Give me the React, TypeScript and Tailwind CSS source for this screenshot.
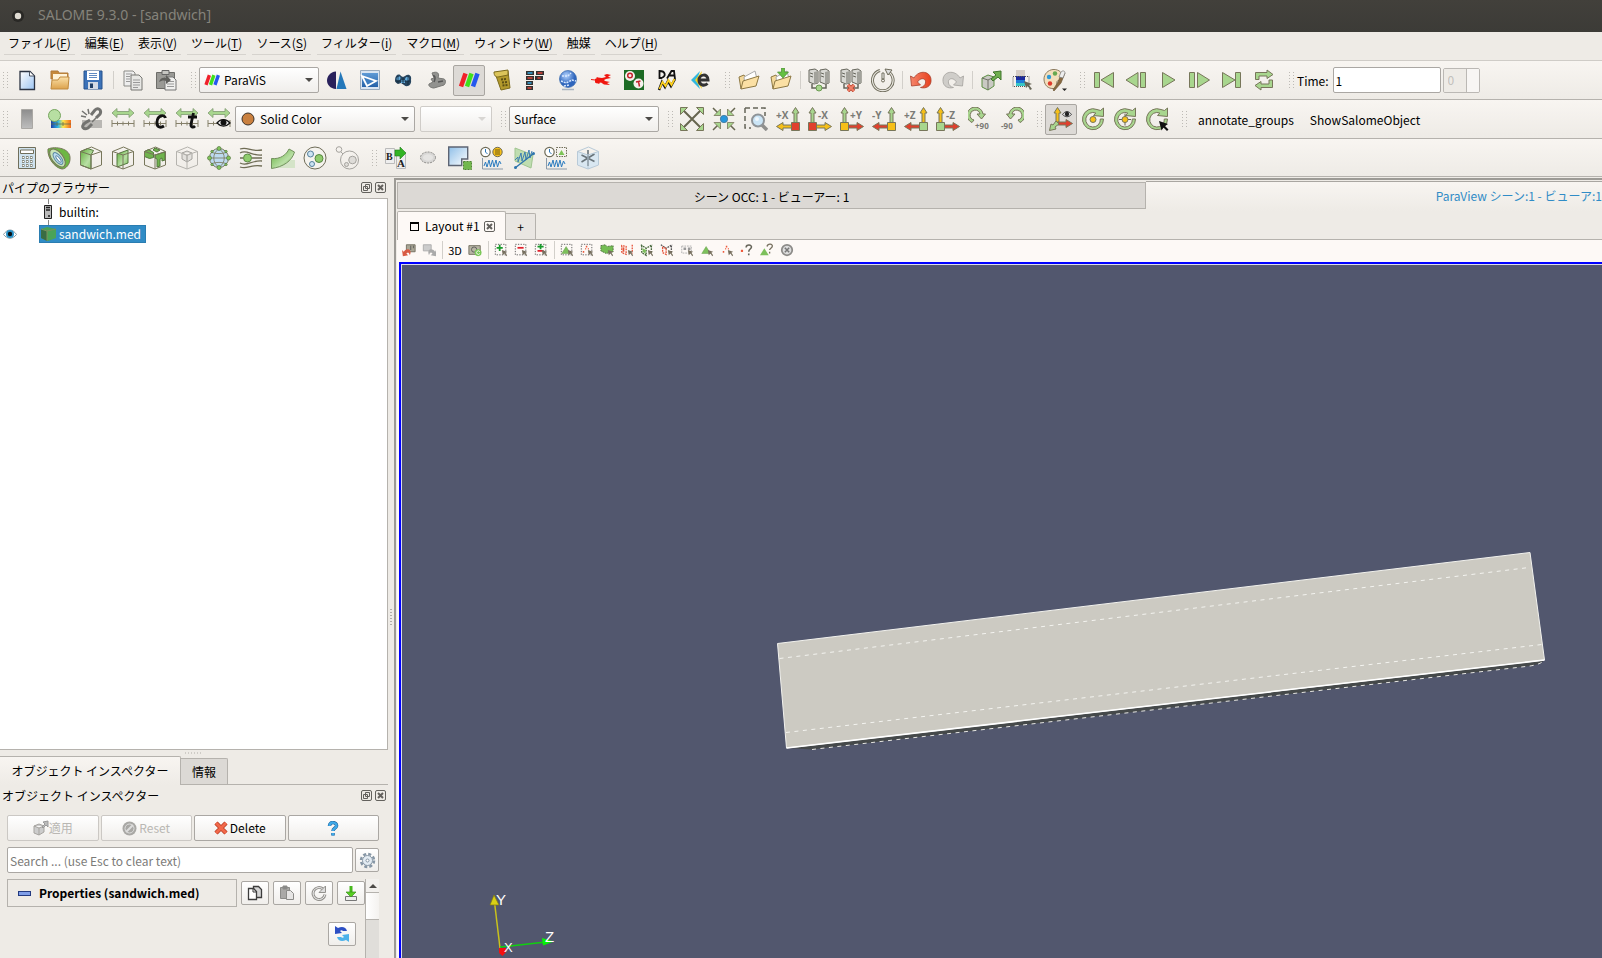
import React, { useState } from 'react'
import clsx from 'clsx'

interface Tool {
  label: string
  icon: React.ReactNode
  active?: boolean
}

const GREEN = '#a8d68e'
const YELLOW = '#f6bf18'
const RED = '#e0402e'
const LINE = '#77765a'

function Icon({ children, small }: { children: React.ReactNode; small?: boolean }) {
  return (
    <svg
      viewBox={small ? '0 0 16 16' : '0 0 24 24'}
      className={small ? 'w-3.5 h-3.5 shrink-0' : 'w-6 h-6 shrink-0'}
      fill="none"
    >
      {children}
    </svg>
  )
}

/* ---------- shared drawings ---------- */

function Stripes() {
  return (
    <g strokeWidth="4.500">
      <path d="M4 18.500 8.500 5.500" stroke="#f0202a" />
      <path d="M10 18.500 14.500 5.500" stroke="#3fe01c" />
      <path d="M16 18.500 20.500 5.500" stroke="#2458ee" />
    </g>
  )
}

function AxisView({ sign, up, side, box, right }: { sign: string; up: string; side: string; box: string; right?: boolean }) {
  // right: the horizontal arrow points to the right and the box sits on the left
  return (
    <Icon>
      <g transform={right ? undefined : 'translate(24 0) scale(-1 1)'} stroke={LINE}>
        <path d="M3 16V6H1l3.500-5.500L8 6H6v10z" fill={up} />
        <path d="M8 18h9v-2.500l6.500 4-6.500 4V21H8z" fill={side} />
        <path d="M.5 15.500h8v8h-8z" fill={box} />
      </g>
      <text x={right ? 10 : 0} y="12" fontSize="10" fontWeight="bold" fill="#7b7b76" fontFamily="Open Sans, sans-serif">
        {sign}
      </text>
    </Icon>
  )
}

function RangeIcon({ children }: { children?: React.ReactNode }) {
  return (
    <Icon>
      <path d="m1 6 5-4.500v3h12v-3L23 6l-5 4.500v-3H6v3z" fill={GREEN} stroke="#7f9a70" strokeWidth=".8" />
      <path d="M1 13v7M23 13v7M1 16.500h22M6.500 14.500v4M12 14.500v4M17.500 14.500v4" stroke="#85806a" />
      {children}
    </Icon>
  )
}

function Cube({ inner, fill, stroke = LINE }: { inner: React.ReactNode; fill?: string; stroke?: string }) {
  return (
    <Icon>
      <path d="M1.500 5.500 12 9v14l-10.500-4zM22.500 5.500 12 9v14l10.500-4z" fill={fill} />
      {inner}
      <path d="M1.500 5.500 12.500 1l10 4.500V19L12 23 1.500 19zM1.500 5.500 12 9l10.500-3.500M12 9v14" stroke={stroke} />
    </Icon>
  )
}

const CIRCLE_ARROW = 'M16 2.500A10.500 10.500 0 1 0 22.500 12h-3.200a7.300 7.300 0 1 1-4.500-6L12.500 8.500 22.500 9.500V1l-3 2.500z'

function Camera({ children, arrow = GREEN }: { children?: React.ReactNode; arrow?: string }) {
  return (
    <Icon>
      <path d={CIRCLE_ARROW} fill={arrow} stroke={LINE} />
      {children}
    </Icon>
  )
}

function Folder() {
  return (
    <>
      <path d="m4 21-2-12 5-2 1 2 10-3 1 3" fill="#f4d99a" stroke="#8d7843" />
      <path d="m7 9 11-6 2 8-12 6z" fill="#fff" stroke="#aaa" />
      <path d="m4 21 2-8 16-5-3 10z" fill="#fbe0a4" stroke="#8d7843" />
    </>
  )
}

function Servers() {
  return (
    <>
      <path d="m2 2 6-1 3 2v12l-4 1-5-2zM13 2l6-1 3 2v12l-4 1-5-2z" fill="#d9d9d4" stroke="#66665c" />
      <path d="M7 4v12l4-1V3zM18 4v12l4-1V3z" fill="#a2a29b" />
      <path d="M3 5l3 1M3 8l3 1M14 5l3 1M14 8l3 1" stroke="#66665c" />
      <path d="M5 16v4h14v-4" stroke="#66665c" strokeWidth="1.500" />
    </>
  )
}

function Clock() {
  return (
    <>
      <circle cx="5.500" cy="6" r="4.700" fill="#fff" stroke="#6f6c58" strokeWidth="1.200" />
      <path d="M5.500 3v3l2 2" stroke="#2d78b8" />
      <path d="M2.500 12v11H23" stroke="#8b9aa8" />
      <path d="m4 20 1.500-4 1.500 5 2-7 1.500 7 2-7 1.500 7 2-7 1.500 7 2-6 1.500 3" stroke="#2b7cc0" />
    </>
  )
}

/* ---------- toolbar contents ---------- */

const fileTools: Tool[] = [
  {
    label: 'New',
    icon: (
      <Icon>
        <path d="M5 3.500h10l4.500 4.500v13.500H5z" fill="url(#sheet)" stroke="#2b3342" strokeWidth="1.300" />
        <path d="M14.500 3.500V8H19" fill="#fff" stroke="#2b3342" strokeWidth=".8" />
      </Icon>
    ),
  },
  {
    label: 'Open',
    icon: (
      <Icon>
        <path d="M3 3h7l1 2h9v6H3z" fill="#c68a3d" stroke="#b07a3a" />
        <path d="M5 6h14v6H5z" fill="#fff3d8" />
        <path d="m3 21 1-9h6l2-3h9l-1 12z" fill="url(#folder)" stroke="#c08b40" />
      </Icon>
    ),
  },
  {
    label: 'Save',
    icon: (
      <Icon>
        <path d="M3 3h18v18H3z" fill="#3c72b8" stroke="#27528d" />
        <path d="M6 3h12v9H6z" fill="#fff" />
        <path d="M8 5.500h8M8 7.500h8M8 9.500h8" stroke="#5f8ac2" />
        <path d="M7 14h10v7H7z" fill="#d4dbe5" />
        <path d="M9 15.500h3V20H9z" fill="#224066" />
      </Icon>
    ),
  },
]

const clipTools: Tool[] = [
  {
    label: 'Copy',
    icon: (
      <Icon>
        <path d="M3 3h9l2 2v13H3z" fill="#eee" stroke="#8b8b87" />
        <path d="M10 7h8l3 3v12H10z" fill="#e8e8e5" stroke="#777773" />
        <path d="M5 6h6M5 8.500h4M5 11h4M5 13.500h4M12 12h7M12 14.500h7M12 17h7M12 19.500h5" stroke="#999" />
      </Icon>
    ),
  },
  {
    label: 'Paste',
    icon: (
      <Icon>
        <path d="M2.500 4.500h18v16h-18z" fill="#9a9a96" stroke="#6d6d69" />
        <path d="M8 2.500h7v4H8z" fill="#c6c6c2" stroke="#666" />
        <path d="M11 9h8l3 3v10H11z" fill="#f0f0ee" stroke="#777" />
        <path d="M13 13.500h7M13 16h7M13 18.500h7" stroke="#999" />
        <path d="M5 14c1-4 4-5 7-4V7l5 5-5 4v-3c-3-1-5 0-7 1z" fill="#5f5f5c" />
      </Icon>
    ),
  },
]

const moduleTools: Tool[] = [
  {
    label: 'Shaper',
    icon: (
      <Icon>
        <path d="M11 3.500v17.500C5 20.500 2 16.500 2 12.500s3-8.500 9-9z" fill="#29215c" />
        <path d="m15.500 3.500 6 17.500H11.500z" fill="#2478ba" />
      </Icon>
    ),
  },
  {
    label: 'Geometry',
    icon: (
      <Icon>
        <path d="M2.500 2.500h19v19h-19z" fill="#d9e5f2" stroke="#9aabbd" />
        <path d="M4 5h16v14H4z" fill="url(#blue)" />
        <path d="m4 8 14 5-9 5z" fill="#3d7dc0" stroke="#fff" strokeWidth="1.800" />
      </Icon>
    ),
  },
  {
    label: 'Mesh',
    icon: (
      <Icon>
        <path d="M4 12c0-5 4-7 6-4l2 1 2-1c4-3 7 0 6 4 1 5-4 8-7 5l-3-2c-3 2-6 0-6-3z" fill="#27455f" />
        <path d="M5.500 11c1-3 4-3 4-1s-3 4-4 1zM14 11c1-3 4-3 4 0s-4 3-4 0zM10 12h4v3h-4z" fill="#64aee0" />
        <path d="M4 13h15M7 8v8M17 8v9M12 10v6" stroke="#0f2233" strokeWidth=".7" />
      </Icon>
    ),
  },
  {
    label: 'Field',
    icon: (
      <Icon>
        <path d="M8 5c5-2 8 0 6 5l6 1c2 1 2 4 0 6l-10 3c-3 0-6-2-5-4l4-2-2-3 3-1z" fill="#92928f" stroke="#787875" />
        <path d="M9 8c3-1 2 4 1 6M14 14l5-1" stroke="#555" strokeWidth="1.500" />
      </Icon>
    ),
  },
  { label: 'ParaViS', active: true, icon: <Icon><Stripes /></Icon> },
  {
    label: 'Homard',
    icon: (
      <Icon>
        <path d="m5 5 13-2 2 17-9 2z" fill="#b39a2c" stroke="#7b6a1c" />
        <path d="M4 4c0 4 2 5 4 5l10-2V2z" fill="#dbc45a" stroke="#7b6a1c" />
        <path d="M11 11.500 17 11M12 14.500l6-.5M12.500 17.500l6-.5" stroke="#5c4f14" strokeDasharray="2 1" strokeWidth="2" />
      </Icon>
    ),
  },
  {
    label: 'YACS',
    icon: (
      <Icon>
        <path d="M3 3h8v4H3zM13 3h8v4h-8zM3 8h8v4H3zM3 13h7v4H3zM3 18h7v4H3zM12 8h8v4h-8z" fill="#333" />
        <path d="M4.500 5h5M4.500 15h4" stroke="#35a7e0" strokeWidth="1.500" />
        <path d="M14.500 5h5M4.500 10h5M4.500 20h4M14.500 10h3" stroke="#e04438" strokeWidth="1.500" />
      </Icon>
    ),
  },
  {
    label: 'JobManager',
    icon: (
      <Icon>
        <circle cx="12" cy="11" r="8.500" fill="url(#globe)" stroke="#3769ad" strokeWidth=".7" />
        <path d="M6 8h6l3-3M5 13l5 2 6-3 4 1M8 18l5-1" stroke="#d7e8ff" strokeWidth="1.500" strokeDasharray="2 1" />
        <path d="M6 21.500h12" stroke="#aab4c2" strokeWidth="1.500" />
      </Icon>
    ),
  },
  {
    label: 'Hexablock',
    icon: (
      <Icon>
        <path d="m6 11 3-1.500 4 .5 4-1-2-2 3-1 4 1-3 1.500 3 1.500-5 1-2 1 1 1 5 1-3 1 3 2-6-.5-3-2-4 1-2-1z" fill="#f0160f" />
        <path d="m2 11.500 4 .5M8 9l2 7" stroke="#f0160f" />
      </Icon>
    ),
  },
  {
    label: 'OpenTURNS',
    icon: (
      <Icon>
        <path d="M2 2h20v20H2z" fill="#1c6b24" />
        <circle cx="8" cy="8" r="5" fill="#f4f1ec" />
        <circle cx="16.500" cy="15.500" r="5" fill="#f4f1ec" />
        <circle cx="8" cy="7.500" r="2.300" stroke="#c3222a" strokeWidth="1.500" />
        <path d="m14 14 4.500-1M16.500 13.500l1 5" stroke="#c3222a" strokeWidth="1.500" />
      </Icon>
    ),
  },
  {
    label: 'ADAO',
    icon: (
      <Icon>
        <path d="M4.500 10V3c6 0 7 5 2 7zM12 10.500l4.500-7.500H19l1 8M13 7.500h6" stroke="#111" strokeWidth="1.800" />
        <path d="m4 22 3-8 3 5 3-6 3 5 4-7" stroke="#111" strokeWidth="2.500" />
        <path d="m4.500 21 3-7 3 4 3-6 3 5 3-6" stroke="#ffd21d" strokeWidth="1.800" />
      </Icon>
    ),
  },
  {
    label: 'eFICAS',
    icon: (
      <Icon>
        <path d="m12 3-9 9 9 9-3-9z" fill="#31b7df" />
        <path d="m14 3-7 9 7 9-2-9z" fill="#f5d322" />
        <path d="M11.500 12h8.500c0-7-9-6-9 0 0 6 6 6 8.500 3.500" stroke="#333" strokeWidth="3" />
      </Icon>
    ),
  },
]

const stateTools: Tool[] = [
  { label: 'Open file', icon: <Icon><Folder /></Icon> },
  {
    label: 'Load state',
    icon: (
      <Icon>
        <Folder />
        <path d="M12.500 0h3v4h4L14 10 8.500 4h4z" fill="#66c043" stroke="#4b8c33" strokeWidth=".7" />
      </Icon>
    ),
  },
]

const serverTools: Tool[] = [
  { label: 'Connect', icon: <Icon><Servers /><circle cx="12" cy="20" r="3" fill={GREEN} stroke="#6b9c52" /></Icon> },
  {
    label: 'Disconnect',
    icon: (
      <Icon>
        <Servers />
        <path d="m9 17 6 6m0-6-6 6" stroke="#b8402c" strokeWidth="3.500" />
        <path d="m9 17 6 6m0-6-6 6" stroke="#f08068" strokeWidth="2" />
      </Icon>
    ),
  },
  {
    label: 'Auto apply',
    icon: (
      <Icon>
        <path d="M16 3A10.300 10.300 0 1 1 9 2.500" stroke="#6f6c5c" strokeWidth="3" />
        <path d="M16 3A10.300 10.300 0 1 1 9 2.500" stroke="#e8e6df" strokeWidth="1.200" />
        <path d="m14 1 7 1-4 5z" fill="#ddd" stroke="#6f6c5c" />
        <path d="M11 5h2v6h-2z" fill="#fff" stroke="#6f6c5c" />
        <circle cx="12" cy="12.500" r="1.500" stroke="#6f6c5c" />
      </Icon>
    ),
  },
]

const UNDO = 'm1.500 8 1 10 9-1-3-3c3-5 9-4 8 1-.5 2-2 4-5 4.500 6 1.500 10-1.500 10.500-6C23 3 10 1 5 10z'

const undoTools: Tool[] = [
  { label: 'Undo', icon: <Icon><path d={UNDO} fill="url(#undo)" stroke="#a8402c" strokeWidth=".8" /></Icon> },
  {
    label: 'Redo',
    icon: <Icon><path d={UNDO} transform="matrix(-1 0 0 1 24 0)" fill="#cfcdc9" stroke="#a3a19d" strokeWidth=".8" /></Icon>,
  },
]

const miscTools: Tool[] = [
  {
    label: 'Extract',
    icon: (
      <Icon>
        <path d="m3 10 6-3 6 2v9l-6 4-6-3z" fill="#c9c9c3" stroke="#5c8e43" />
        <path d="m3 10 6 2 6-3M9 12v10" stroke="#6f6f66" />
        <path d="m12 11 5-4-3-3 8-1v9l-3-3-5 4z" fill="#6fae4e" stroke="#40742c" />
      </Icon>
    ),
  },
  {
    label: 'Color map',
    icon: (
      <Icon>
        <path d="M5 2h9v6H5z" fill="#d6cdc6" />
        <path d="M5 8h9v4H5z" fill="#1c2a9c" />
        <path d="M5 12h9v3H5z" fill="#1e7cd8" />
        <path d="M5 15h9v3H5z" fill="#38c6c6" />
        <path d="M2 8.500h16v10H2z" stroke="#555" strokeDasharray="1 1" />
        <path d="m13 13 8 3-3 1 3 4-2 1-2-4-2 2z" fill="#666555" />
      </Icon>
    ),
  },
  {
    label: 'Palette',
    icon: (
      <Icon>
        <path d="M10 1.500c6-.5 11 4 9 9-1 3-4 1-5 3s2 6-3 7C5 21 1 17 1 11c0-5 4-9 9-9.500z" fill="#f3dfbd" stroke="#8d7c60" />
        <circle cx="6" cy="9" r="2.200" fill="#2f9ad6" />
        <circle cx="12" cy="5.500" r="2.200" fill="#67a850" />
        <circle cx="7" cy="15.500" r="2.200" fill="#de3a2b" />
        <path d="m19 4 3 1-4 10-7 8-1-1 5-8z" fill="#8a6a41" stroke="#6f5a3b" strokeWidth=".7" />
        <path d="M18 4c2-2 4-1 4 1l-2 5-4-1z" fill="#eee" stroke="#777" strokeWidth=".7" />
        <path d="M19 20.500h5l-2.500 2.500z" fill="#222" />
      </Icon>
    ),
  },
]

const vcrTools: Tool[] = [
  { label: 'First frame', icon: <Icon><path d="M2.500 4.500h5v15h-5zM21.500 4.500v15L9 12z" fill={GREEN} stroke={LINE} /></Icon> },
  { label: 'Previous frame', icon: <Icon><path d="M16.500 4.500h5v15h-5zM14 4.500v15L2 12z" fill={GREEN} stroke={LINE} /></Icon> },
  { label: 'Play', icon: <Icon><path d="M6.500 4.500v15L19 12z" fill={GREEN} stroke={LINE} /></Icon> },
  { label: 'Next frame', icon: <Icon><path d="M1.500 4.500h5v15h-5zM9.500 4.500v15l12-7.500z" fill={GREEN} stroke={LINE} /></Icon> },
  { label: 'Last frame', icon: <Icon><path d="M15.500 4.500h5v15h-5zM2.500 4.500v15L15 12z" fill={GREEN} stroke={LINE} /></Icon> },
  {
    label: 'Loop',
    icon: (
      <Icon>
        <path d="M3.500 11.500v-7H15V2l6 4.500-6 4V8H7v3.500zM20.500 12v7.500H9V22l-6-4.500 6-4V16h8v-4z" fill={GREEN} stroke={LINE} />
      </Icon>
    ),
  },
]

const colorTools: Tool[] = [
  { label: 'Toggle color legend', icon: <Icon><path d="M6.500 2.500h11v19h-11z" fill="url(#legend)" stroke="#aaa8a4" /></Icon> },
  {
    label: 'Edit color map',
    icon: (
      <Icon>
        <path d="M4 13h20v8H4z" fill="url(#rainbow)" />
        <path d="M4 17h20M10 15v4M16 15v4" stroke="#5f6c50" strokeWidth=".8" />
        <circle cx="7.500" cy="8.500" r="6" fill="#b7dfa2" stroke="#76a65e" />
      </Icon>
    ),
  },
  {
    label: 'Separate color map',
    icon: (
      <Icon>
        <path d="M3 13h20v8H3z" fill="#b9b7b3" />
        <path d="m12 8 4-5c3-3 7 0 5 4l-4 4M11 13l-5 3c-5 4-1 7 3 5l4-4" stroke="#737370" strokeWidth="3" />
        <path d="M3 4l5 4M9 2l1 5M2 9l5 1M13 15l4-4" stroke="#737370" strokeWidth="1.500" />
      </Icon>
    ),
  },
  { label: 'Rescale to data', icon: <RangeIcon /> },
  {
    label: 'Rescale to custom',
    icon: (
      <RangeIcon>
        <path d="M22.500 11c-1-4-8-3-8.500 4-.5 6 4 6 7 4" stroke="#111" strokeWidth="2.800" />
      </RangeIcon>
    ),
  },
  {
    label: 'Rescale over time',
    icon: (
      <RangeIcon>
        <path d="m18.500 6-2.500 11c-.5 3 2 4 4 2M13 10h9" stroke="#111" strokeWidth="2.800" />
      </RangeIcon>
    ),
  },
  {
    label: 'Rescale to visible',
    icon: (
      <RangeIcon>
        <path d="M10 16c3-4 9-5 13 0-4 4-9 4-13 0z" fill="#eee" stroke="#111" strokeWidth="1.300" />
        <circle cx="16.500" cy="15.500" r="3" fill="#111" />
      </RangeIcon>
    ),
  },
]

const cameraTools: Tool[] = [
  {
    label: 'Reset camera',
    icon: (
      <Icon>
        <path d="m4 4 16 16M20 4 4 20" stroke="#66654f" strokeWidth="2" />
        <path d="M.5.5h7l-7 7zM23.500.5v7l-7-7zM.5 23.500v-7l7 7zM23.500 23.500h-7l7-7z" fill={GREEN} stroke={LINE} />
      </Icon>
    ),
  },
  {
    label: 'Zoom to data',
    icon: (
      <Icon>
        <path d="m1 1 6 6M23 1l-6 6M1 23l6-6M23 23l-6-6" stroke="#66654f" strokeWidth="1.500" />
        <path d="M8.500 8.500H2l6.500-6.500zM15.500 8.500V2L22 8.500zM8.500 15.500V22L2 15.500zM15.500 15.500H22L15.500 22z" fill={GREEN} stroke={LINE} strokeWidth=".8" />
        <circle cx="12" cy="12" r="3.700" fill="#2796dc" stroke="#43708e" strokeWidth=".7" />
      </Icon>
    ),
  },
  {
    label: 'Zoom to box',
    icon: (
      <Icon>
        <path d="M1 1h20v8M1 1v20h6" stroke="#66655a" strokeWidth="1.500" strokeDasharray="5 3" />
        <path d="m18 18 5 5" stroke="#8f8f8c" strokeWidth="3.500" />
        <circle cx="14" cy="13.500" r="6" fill="#cbe5f6" stroke="#8f9498" strokeWidth="2" />
        <circle cx="13" cy="12" r="2" fill="#fff" opacity=".7" />
      </Icon>
    ),
  },
  { label: '+X', icon: <AxisView sign="+X" up={GREEN} side={YELLOW} box={RED} /> },
  { label: '-X', icon: <AxisView sign="-X" up={GREEN} side={YELLOW} box={RED} right /> },
  { label: '+Y', icon: <AxisView sign="+Y" up={GREEN} side={RED} box={YELLOW} right /> },
  { label: '-Y', icon: <AxisView sign="-Y" up={GREEN} side={RED} box={YELLOW} /> },
  { label: '+Z', icon: <AxisView sign="+Z" up={YELLOW} side={RED} box={GREEN} /> },
  { label: '-Z', icon: <AxisView sign="-Z" up={YELLOW} side={RED} box={GREEN} right /> },
  {
    label: 'Rotate +90',
    icon: (
      <Icon>
        <path d="M4 15.500A8 8 0 1 1 15 7h2.500l-4 5-4.500-5H12a5 5 0 1 0-6 6z" fill={GREEN} stroke={LINE} />
        <text x="7" y="22" fontSize="8" fontWeight="bold" fill="#7b7b76" fontFamily="Open Sans, sans-serif">+90</text>
      </Icon>
    ),
  },
  {
    label: 'Rotate -90',
    icon: (
      <Icon>
        <path d="M20 15.500A8 8 0 1 0 9 7H6.500l4 5L15 7h-3a5 5 0 1 1 6 6z" fill={GREEN} stroke={LINE} />
        <text x="1" y="22" fontSize="8" fontWeight="bold" fill="#7b7b76" fontFamily="Open Sans, sans-serif">-90</text>
      </Icon>
    ),
  },
]

const centerTools: Tool[] = [
  {
    label: 'Show orientation axes',
    active: true,
    icon: (
      <Icon>
        <path d="M7 15V6H5l3.500-5.500L12 6h-2v9z" fill={YELLOW} stroke={LINE} />
        <path d="M9 15h8v-2.500l6.500 4-6.500 4V18H9z" fill={RED} stroke={LINE} />
        <path d="m7 14 3 3-4 3 1 2-6.500 1.500L2 17l2 1z" fill={GREEN} stroke={LINE} />
        <path d="M13.500 7.500c3-4 6-4 9 0-3 3-6 3-9 0z" fill="#ddd" stroke="#444" />
        <circle cx="18" cy="7" r="2.200" fill="#222" />
      </Icon>
    ),
  },
  { label: 'Show center', icon: <Camera><circle cx="12" cy="12.500" r="3" fill={YELLOW} stroke={LINE} /></Camera> },
  {
    label: 'Reset center',
    icon: (
      <Camera>
        <path d="M12 6.500v12M6 12.500h12" stroke="#66654f" />
        <circle cx="12" cy="12.500" r="3" fill={YELLOW} stroke={LINE} />
      </Camera>
    ),
  },
  { label: 'Pick center', icon: <Camera><path d="m14 14 9 3-3 2 3.500 3.500L22 24l-3.500-3.500-2 3z" fill="#111" /></Camera> },
]

const filterTools: Tool[] = [
  {
    label: 'Calculator',
    icon: (
      <Icon>
        <path d="M3.500 1.500h17v21h-17z" fill="#cfe2ee" stroke="#706e5a" />
        <path d="M5.500 4h13v3.500h-13z" fill="#fff" stroke="#706e5a" />
        <path d="M7 11.500h2.500M11 11.500h2.500M15 11.500h2.500M7 15.500h2.500M11 15.500h2.500M15 15.500h2.500M7 19.500h2.500M11 19.500h2.500M15 19.500h2.500" stroke="#706e5a" strokeWidth="2.500" />
        <path d="M7.500 11.500h1.500M11.500 11.500h1.500M15.500 11.500h1.500M7.500 15.500h1.500M11.500 15.500h1.500M15.500 15.500h1.500M7.500 19.500h1.500M11.500 19.500h1.500M15.500 19.500h1.500" stroke="#fff" strokeWidth="1.200" />
      </Icon>
    ),
  },
  {
    label: 'Contour',
    icon: (
      <Icon>
        <path d="M1 3c7-3 23-1 22 10 0 5-4 10-8 10C8 22 0 12 1 3z" fill="#6db743" stroke={LINE} />
        <ellipse cx="10.500" cy="12" rx="5.500" ry="10.500" transform="rotate(-38 10.500 12)" fill="#c8e4b8" stroke={LINE} />
        <ellipse cx="11" cy="12.500" rx="3.200" ry="7" transform="rotate(-38 11 12.500)" fill="#bcdcf0" stroke="#5b86a2" />
        <ellipse cx="11.500" cy="13" rx="1.300" ry="4" transform="rotate(-38 11.500 13)" fill="#fff" stroke="#5b86a2" />
      </Icon>
    ),
  },
  { label: 'Clip', icon: <Cube inner={<path d="m1.500 5.500 7-3 6 2-2.500 4.500v14l-10.500-4z" fill="url(#leaf)" stroke="#54783e" />} /> },
  { label: 'Slice', icon: <Cube inner={<path d="m6 8 11-4v13L6 21z" fill="url(#leaf)" stroke="#54783e" />} /> },
  {
    label: 'Threshold',
    icon: <Cube inner={<path d="m1.500 5.500 4-2 5 3v5l-4 1-5-2zM12 9l10-3v8l-3 1v-3l-2 1v7l-3 1v-8l-2-1zM12 2l5 2-3 2-4-2z" fill="#70b34d" stroke="#54783e" />} />,
  },
  {
    label: 'Extract subset',
    icon: <Cube stroke="#b5b3ae" inner={<path d="m7 7 5-2 5 2v6l-5 3-5-3zM7 7l5 2.500L17 7M12 9v7" fill="#e3e1dd" stroke="#a4a29e" />} />,
  },
  {
    label: 'Glyph',
    icon: (
      <Icon>
        <circle cx="12" cy="12" r="9.500" fill="#bddaf0" stroke={LINE} />
        <path d="M2.500 12h19M5 6.500c4 1.500 10 1.500 14 0M5 17.500c4-1.500 10-1.500 14 0M12 2.500c-7 5-7 14 0 19M12 2.500c7 5 7 14 0 19" stroke={LINE} strokeWidth=".8" />
        <g fill="#82c65c" stroke="#55753f" strokeWidth=".7">
          <circle cx="12" cy="2.500" r="2" />
          <circle cx="12" cy="21.500" r="2" />
          <circle cx="2.500" cy="12" r="2" />
          <circle cx="21.500" cy="12" r="2" />
          <circle cx="5" cy="5.500" r="1.200" />
          <circle cx="19" cy="5.500" r="1.200" />
          <circle cx="5" cy="18.500" r="1.200" />
          <circle cx="19" cy="18.500" r="1.200" />
        </g>
      </Icon>
    ),
  },
  {
    label: 'Stream tracer',
    icon: (
      <Icon>
        <path d="M1 3c8-3 9 3 22 1M1 7c7-4 11 3 22 2M1 12h3M13 12h10M1 17c7 4 11-3 22-2M1 21c8 3 9-3 22-1" stroke="#6f6c55" strokeWidth="1.300" />
        <circle cx="8.500" cy="12" r="4" fill="#90cc6e" stroke="#5c8a43" />
      </Icon>
    ),
  },
  {
    label: 'Warp by vector',
    icon: (
      <Icon>
        <path d="M12 14h12v8H1z" fill="#d5e4c8" />
        <path d="M.5 12.500c9 1 15-4 17.500-9.500l5.500 3C21 15 12 21 .5 22.500z" fill="url(#leaf)" stroke="#73915e" />
      </Icon>
    ),
  },
  {
    label: 'Group datasets',
    icon: (
      <Icon>
        <circle cx="12" cy="12" r="11" fill="#f5f3ee" stroke="#6f6c58" />
        <circle cx="7.500" cy="8" r="3" fill="#cde4f3" stroke="#55809c" />
        <circle cx="16" cy="12.500" r="4" fill="#90cc6e" stroke="#57863f" />
        <circle cx="9" cy="18" r="2.500" fill="#cde4f3" stroke="#55809c" />
      </Icon>
    ),
  },
  {
    label: 'Extract level',
    icon: (
      <Icon>
        <circle cx="14.500" cy="14" r="9" stroke="#a5a39e" />
        <circle cx="4" cy="3.500" r="2.800" stroke="#a5a39e" />
        <circle cx="17.500" cy="14" r="3.800" fill="#dedcd8" stroke="#a5a39e" />
        <circle cx="11.500" cy="18.500" r="2" fill="#dedcd8" stroke="#a5a39e" />
        <path d="m6 6 2 2" stroke="#a5a39e" />
      </Icon>
    ),
  },
]

const analysisTools: Tool[] = [
  {
    label: 'Find data',
    icon: (
      <Icon>
        <path d="M1.500 2.500h9v15h-9z" fill="#eee" stroke="#bbb" />
        <path d="M12.500 6.500h9v16h-9z" fill="#eee" stroke="#bbb" />
        <text x="2" y="14" fontSize="10" fontFamily="Liberation Serif, serif" fontWeight="bold" fill="#222">B</text>
        <path d="M11 4h5V1l6 6-6 6v-3h-5z" fill="#32b424" stroke="#1f7c18" strokeWidth=".6" />
        <text x="13" y="21" fontSize="11" fontFamily="Liberation Serif, serif" fontWeight="bold" fill="#222">A</text>
      </Icon>
    ),
  },
  {
    label: 'Ellipse',
    icon: (
      <Icon>
        <ellipse cx="12" cy="11.500" rx="7.500" ry="5.500" fill="#d8d7d5" stroke="#8c8b88" strokeDasharray="2 1" />
        <ellipse cx="12" cy="11.500" rx="5" ry="3.200" fill="#e5e4e2" />
      </Icon>
    ),
  },
  {
    label: 'Extract selection',
    icon: (
      <Icon>
        <path d="M.7 1h19v12h-6v6.500H.7z" fill="url(#sheetblue)" stroke="#5d6473" strokeWidth="1.400" />
        <path d="M15.500 15.500h8v8h-8z" fill="#72b84d" stroke="#4f8533" strokeDasharray="2 1" />
      </Icon>
    ),
  },
  {
    label: 'Plot global variables over time',
    icon: (
      <Icon>
        <Clock />
        <circle cx="17.500" cy="6" r="4.700" fill={YELLOW} stroke="#6f6c58" />
        <path d="M15 4h5M15 6h5M15 8h5" stroke="#6f5b12" />
      </Icon>
    ),
  },
  {
    label: 'Plot over line',
    icon: (
      <Icon>
        <path d="m3 2 18 7-2 13L3 15z" fill="#bfddb0" stroke="#a0c590" />
        <path d="m3 14 3-3v5l3-9 1 8 3-9 1 8 3-10 1 8 2-7" stroke="#3d7fb2" />
        <path d="M3 22 21 8" stroke="#2f75ad" strokeWidth="1.500" />
        <circle cx="3.500" cy="21.500" r="1.500" fill="#2f75ad" />
        <circle cx="21.500" cy="7.500" r="1.500" fill="#2f75ad" />
      </Icon>
    ),
  },
  {
    label: 'Plot selection over time',
    icon: (
      <Icon>
        <Clock />
        <path d="M12.500 1.500h10v9h-10z" stroke="#6f6c58" strokeDasharray="1.500 1" />
        <path d="m17.500 4 3 5h-6z" fill="#7dc457" />
      </Icon>
    ),
  },
  {
    label: 'Probe location',
    icon: <Cube stroke="#b8cad8" fill="#d9e7f1" inner={<path d="M12 4v16M5.500 9l13 6.500M18.500 8 5.500 16" stroke="#69747a" strokeWidth="1.600" />} />,
  },
]

/* small icons above the render view */

const CURSOR = <path d="m9 8 6 2-2 1 2 3-1 1-2-3-2 2z" fill="#77705f" />
const DOTBOX = <path d="M1.500 1.500h12v12h-12z" stroke="#555" strokeDasharray="1.500 1.500" />
const TRI = <path d="m7 4 5 8H2z" fill="#7dc05c" stroke="#5d9a40" strokeWidth=".5" />
const DOTS = <path d="M7.500 3v2M4 9v2M11 9v2M6 6.500h1M9 6.500h1" stroke="#ef5a3c" strokeWidth="1.700" />

const viewUndo: Tool[] = [
  {
    label: 'Camera undo',
    icon: (
      <Icon small>
        <path d="M5 2h10v8H5z" fill="#aaa796" stroke="#6f6c5c" />
        <path d="M10 3v5M13 3v3" stroke="#555" />
        <path d="m0 8 1 7 6-1-2-2c2-2 3-1 4 2 3-7-3-9-7-4z" fill="#d95b43" />
      </Icon>
    ),
  },
  {
    label: 'Camera redo',
    icon: (
      <Icon small>
        <path d="M1.500 2h9v7h-9z" fill="#ccc" stroke="#aaa" />
        <path d="M16 8v7l-6-1 2-2c-2-2-3-1-4 2-3-7 3-9 7-4z" fill="#aaa" />
      </Icon>
    ),
  },
]

const viewCapture: Tool[] = [
  {
    label: 'Capture',
    icon: (
      <Icon small>
        <path d="M1 3h13v10H1z" fill="#b8b5a4" stroke="#6f6c5c" />
        <circle cx="7" cy="7.500" r="3" stroke="#555" />
        <circle cx="11.500" cy="11" r="4" fill="#7cc859" />
        <path d="M13.500 10a2 2 0 1 0 0 2" stroke="#fff" />
      </Icon>
    ),
  },
]

const viewPlusMinus: Tool[] = [
  { label: 'Add selection', icon: <Icon small>{DOTBOX}<path d="M3 5.500h7M6.500 2v7" stroke="#189a2b" strokeWidth="2" />{CURSOR}</Icon> },
  { label: 'Subtract selection', icon: <Icon small>{DOTBOX}<path d="M4 5.500h7" stroke="#e0202c" strokeWidth="2" />{CURSOR}</Icon> },
  {
    label: 'Toggle selection',
    icon: (
      <Icon small>
        {DOTBOX}
        <path d="M4 4h7M7.500 1v6" stroke="#189a2b" strokeWidth="2" />
        <path d="M4 9h7" stroke="#e0202c" strokeWidth="2" />
        {CURSOR}
      </Icon>
    ),
  },
]

const viewSelect: Tool[] = [
  { label: 'Select cells on', icon: <Icon small>{DOTBOX}{TRI}{CURSOR}</Icon> },
  { label: 'Select points on', icon: <Icon small>{DOTBOX}{DOTS}{CURSOR}</Icon> },
  {
    label: 'Select cells through',
    icon: <Icon small><path d="m1 3 5-1 2 2 7-1v7l-8 2-6-3z" fill="#75bd54" stroke="#4e6b3e" strokeDasharray="2 1" />{CURSOR}</Icon>,
  },
  {
    label: 'Select points through',
    icon: <Icon small><path d="M2 3v8l5 2V4zM14 2v10" stroke="#e6553c" strokeWidth="1.500" strokeDasharray="2 1" /><path d="M4 5v5" stroke="#e6553c" strokeWidth="2" />{CURSOR}</Icon>,
  },
  {
    label: 'Select cells polygon',
    icon: <Icon small><path d="m1 2 6 4 7-4M2 3v8l5 3V6M13 3v9" stroke="#45673a" strokeWidth="1.500" strokeDasharray="2 1" /><path d="m3 6 4 2-1 4-3-2z" fill="#7dc05c" />{CURSOR}</Icon>,
  },
  {
    label: 'Select points polygon',
    icon: <Icon small><path d="m1 2 6 4 7-4M13 3v9" stroke="#555" strokeWidth="1.500" strokeDasharray="2 1" /><path d="M3 5v6l4 2V6z" stroke="#e6553c" strokeWidth="1.500" strokeDasharray="2 1" />{CURSOR}</Icon>,
  },
  {
    label: 'Select block',
    icon: <Icon small><path d="M2 3.500h11v8H2z" stroke="#aaa" strokeDasharray="2 1" /><path d="M4 5h3v3H4zM9 5h3v3H9z" fill="#999" />{CURSOR}</Icon>,
  },
  { label: 'Interactive cells', icon: <Icon small>{TRI}{CURSOR}</Icon> },
  { label: 'Interactive points', icon: <Icon small>{DOTS}{CURSOR}</Icon> },
  {
    label: 'Hover points',
    icon: <Icon small><path d="M1 9h2.500" stroke="#ef5a3c" strokeWidth="2.500" /><path d="M7 5c0-4 7-3 6 0-.5 2-3 2-3 5M10 12v2" stroke="#66655a" strokeWidth="1.800" /></Icon>,
  },
  {
    label: 'Hover cells',
    icon: <Icon small><path d="m5 6 5 8H0z" fill="#7dc05c" /><path d="M8 4c1-4 7-3 6 0-.5 2-3 2-3 4M11 10v2" stroke="#77705f" strokeWidth="1.500" /></Icon>,
  },
  {
    label: 'Clear selection',
    icon: <Icon small><circle cx="8" cy="8" r="6" fill="#ddd" stroke="#8c8b88" strokeWidth="2" /><path d="m5.500 5.500 5 5m0-5-5 5" stroke="#777" strokeWidth="1.700" /></Icon>,
  },
]

/* ---------- building blocks ---------- */

function Defs() {
  return (
    <svg className="absolute w-0 h-0" aria-hidden="true">
      <defs>
        <linearGradient id="sheet" x1="0" y1="0" x2="1" y2="1"><stop stopColor="#fff" /><stop offset="1" stopColor="#9cc4f2" /></linearGradient>
        <linearGradient id="sheetblue" x1="0" y1="0" x2="1" y2="1"><stop stopColor="#8fbfe8" /><stop offset="1" stopColor="#fff" /></linearGradient>
        <linearGradient id="folder" x1="0" y1="0" x2="0" y2="1"><stop stopColor="#fbe0a8" /><stop offset="1" stopColor="#dca24c" /></linearGradient>
        <linearGradient id="blue" x1="0" y1="0" x2="0" y2="1"><stop stopColor="#5f9bd6" /><stop offset="1" stopColor="#2461a8" /></linearGradient>
        <linearGradient id="undo" x1="0" y1="0" x2="1" y2="0"><stop stopColor="#f5866c" /><stop offset="1" stopColor="#e8401e" /></linearGradient>
        <linearGradient id="legend" x1="0" y1="0" x2="0" y2="1"><stop stopColor="#8d8d8d" /><stop offset="1" stopColor="#bebebe" /></linearGradient>
        <linearGradient id="leaf" x1="0" y1="0" x2="1" y2="1"><stop stopColor="#5fae38" /><stop offset=".6" stopColor="#b9dfa5" /><stop offset="1" stopColor="#7dc05c" /></linearGradient>
        <radialGradient id="globe" cx=".4" cy=".3"><stop stopColor="#b4d4ff" /><stop offset="1" stopColor="#2f66bd" /></radialGradient>
        <linearGradient id="rainbow">
          <stop stopColor="#1d3fa6" /><stop offset=".35" stopColor="#2fb7e8" /><stop offset=".6" stopColor="#ffe74a" /><stop offset="1" stopColor="#f06a1c" />
        </linearGradient>
      </defs>
    </svg>
  )
}

function ToolGroup({ tools, className }: { tools: Tool[]; className?: string }) {
  return (
    <div className={clsx('flex items-center shrink-0', className)}>
      {tools.map((tool) => (
        <button
          key={tool.label}
          type="button"
          aria-label={tool.label}
          className={clsx(
            'flex items-center justify-center w-8 h-[31px] rounded-xs border',
            tool.active ? 'bg-[#dddad6] border-[#a9a6a1]' : 'border-transparent hover:bg-white',
          )}
        >
          {tool.icon}
        </button>
      ))}
    </div>
  )
}

function SmallTools({ tools }: { tools: Tool[] }) {
  return (
    <>
      {tools.map((tool) => (
        <button key={tool.label} type="button" aria-label={tool.label} className="flex items-center justify-center w-5 h-5 shrink-0">
          {tool.icon}
        </button>
      ))}
    </>
  )
}

function Grip({ first }: { first?: boolean }) {
  return (
    <div className={clsx('w-[11px] flex justify-center shrink-0', !first && 'ml-1.5')}>
      <svg width="5" height="18" fill="none">
        <path d="M.5 1v17M4.500 1v17" stroke="#bdbab5" strokeDasharray="1 2" />
      </svg>
    </div>
  )
}

function Separator({ wide }: { wide?: boolean }) {
  return (
    <div className={clsx('flex justify-center shrink-0', wide ? 'w-2' : 'w-1.5')}>
      <div className="w-px h-[18px] bg-[#d2cfca]" />
    </div>
  )
}

function Combo({ label, value, icon, className, disabled }: { label: string; value: string; icon?: React.ReactNode; className: string; disabled?: boolean }) {
  return (
    <div className={clsx('relative shrink-0 h-[26px]', className)}>
      <select
        aria-label={label}
        disabled={disabled}
        className={clsx(
          'appearance-none w-full h-full rounded-xs border bg-linear-to-b from-white to-[#f0eeeb] outline-none',
          icon ? 'pl-6' : 'pl-1',
          disabled ? 'border-[#cfccc8]' : 'border-[#aaa7a3]',
        )}
      >
        <option>{value}</option>
      </select>
      {icon && <span className="absolute left-1 inset-y-0 flex items-center pointer-events-none">{icon}</span>}
      <svg width="8" height="4" className="absolute right-1.5 top-[11px] pointer-events-none">
        <path d="M0 0h8L4 4z" fill={disabled ? '#d8d6d3' : '#4c4a47'} />
      </svg>
    </div>
  )
}

function DockTitle({ title }: { title: string }) {
  return (
    <div className="flex items-center h-[21px] pl-0.5 pr-0.5 gap-[3px]">
      <h2 className="grow">{title}</h2>
      <button type="button" aria-label="Float">
        <svg width="11" height="11" fill="none" stroke="#63615d">
          <rect x=".5" y=".5" width="10" height="10" rx="1.500" />
          <path d="M4.500 2.500h4v4h-4zM2.500 4.500h4v4h-4z" />
        </svg>
      </button>
      <button type="button" aria-label="Close">
        <CloseBox />
      </button>
    </div>
  )
}

function CloseBox() {
  return (
    <svg width="11" height="11" fill="none" stroke="#63615d">
      <rect x=".5" y=".5" width="10" height="10" rx="1.500" />
      <path d="m3 3 5 5m0-5-5 5" strokeWidth="2" />
    </svg>
  )
}

const menus = [
  { text: 'ファイル', key: 'F' },
  { text: '編集', key: 'E' },
  { text: '表示', key: 'V' },
  { text: 'ツール', key: 'T' },
  { text: 'ソース', key: 'S' },
  { text: 'フィルター', key: 'i' },
  { text: 'マクロ', key: 'M' },
  { text: 'ウィンドウ', key: 'W' },
  { text: '触媒' },
  { text: 'ヘルプ', key: 'H' },
]

const toolbarRow = 'flex items-center border-b border-[#b5b2ad] bg-linear-to-b from-[#f8f5f1] to-[#eeebe6] overflow-hidden'
const pushButton = 'flex items-center justify-center rounded-xs border border-[#aaa7a3] bg-linear-to-b from-white to-[#f0eeeb] disabled:border-[#cbc8c4] disabled:text-[#b9b7b3]'

/* ---------- panels ---------- */

function PipelineBrowser() {
  return (
    <section className="flex flex-col grow min-h-0">
      <DockTitle title="パイプのブラウザー" />
      <ul className="grow bg-white border-t border-r border-b border-[#b5b2ad]">
        <li className="flex items-center h-[26px] pl-[42px] gap-[5px]">
          <svg width="12" height="26" fill="none">
            <path d="M6.500 0v5M6.500 21v5" stroke="#888" />
            <path d="M2.500 6.500h7v13h-7z" fill="#bbb" stroke="#222" />
            <path d="M4 8.500h4M4 11h4" stroke="#222" strokeWidth="1.500" />
            <path d="M6 16h2v2H6z" fill="#444" />
          </svg>
          <span>builtin:</span>
        </li>
        <li className="flex items-center h-[18px] pl-[3px]">
          <button type="button" aria-label="Visibility" className="w-9 shrink-0">
            <svg width="14" height="11" fill="none">
              <path d="M.5 5.500c4-6 9-6 13 0-4 5-9 5-13 0z" fill="#fff" stroke="#8d9aa0" />
              <circle cx="7" cy="5" r="4" fill="#2a93c9" />
              <circle cx="7" cy="5" r="2.200" fill="#0a1014" />
            </svg>
          </button>
          <span className="flex items-center gap-[3px] h-[18px] pl-px pr-1 bg-[#308cc6] border border-[#2a7db1] text-white">
            <svg width="15" height="16" fill="none">
              <path d="m0 3 6-2 9 2v9l-8 3-7-3z" fill="#4aa357" />
              <path d="M0 3 6 5v10l-6-3z" fill="#3a6c43" />
              <path d="m0 3 6 2 9-2M6 5v10" stroke="#7c8f5d" />
            </svg>
            sandwich.med
          </span>
        </li>
      </ul>
    </section>
  )
}

function ObjectInspector() {
  return (
    <section className="shrink-0">
      <div className="flex justify-center items-center h-[6px]">
        <svg width="18" height="2"><path d="M0 1h18" stroke="#b0ada8" strokeDasharray="1 2" /></svg>
      </div>
      <div role="tablist" className="flex items-end border-b border-[#b5b2ad] h-[29px]">
        <button role="tab" aria-selected="true" type="button" className="w-[181px] h-[29px] -mb-px border-t border-r border-[#b5b2ad] rounded-tr-xs bg-linear-to-b from-[#f8f5f1] to-[#eeebe6] whitespace-nowrap">
          オブジェクト インスペクター
        </button>
        <button role="tab" aria-selected="false" type="button" className="w-[47px] h-[26px] border-t border-r border-[#b5b2ad] rounded-tr-xs bg-[#dcd9d5]">
          情報
        </button>
      </div>
      <DockTitle title="オブジェクト インスペクター" />
      <div className="pl-[7px] pr-[9px] pt-[9px] flex flex-col gap-1.5">
        <div className="grid grid-cols-4 gap-0.5">
          <button type="button" disabled className={clsx(pushButton, 'h-[26px]')}>
            <svg width="16" height="16" fill="none">
              <path d="m1 6 5-2 5 2v6l-5 3-5-2zM1 6l5 2 5-2M6 8v7" fill="#ccc" stroke="#a5a39f" />
              <path d="m9 7 3-3-2-2 5-1v6l-2-2-3 3z" fill="#bbb" stroke="#999" />
            </svg>
            適用
          </button>
          <button type="button" disabled className={clsx(pushButton, 'h-[26px] gap-0.5')}>
            <svg width="15" height="15" fill="none">
              <circle cx="7.500" cy="7.500" r="7" fill="#a9a8a5" />
              <circle cx="7.500" cy="7.500" r="4.500" stroke="#ddd" />
              <path d="m4 11 7-7" stroke="#ddd" strokeWidth="2" />
            </svg>
            Reset
          </button>
          <button type="button" className={clsx(pushButton, 'h-[26px] gap-0.5')}>
            <svg width="14" height="14" fill="none">
              <path d="m2 2 10 10M12 2 2 12" stroke="#b33a22" strokeWidth="4.500" />
              <path d="m2 2 10 10M12 2 2 12" stroke="#f2684a" strokeWidth="3" />
            </svg>
            Delete
          </button>
          <button type="button" aria-label="Help" className={clsx(pushButton, 'h-[26px]')}>
            <svg width="12" height="15" fill="none">
              <path d="M2.500 5c0-5 7.500-4 7 0-.5 2.500-3.500 2-3.500 5M6 12v2.500" stroke="#1f5f96" strokeWidth="3.500" />
              <path d="M2.500 5c0-5 7.500-4 7 0-.5 2.500-3.500 2-3.500 5M6 12v2.500" stroke="#3fa9e8" strokeWidth="2.500" />
            </svg>
          </button>
        </div>
        <div className="flex items-center gap-0.5">
          <input
            type="search"
            aria-label="Search"
            placeholder="Search ... (use Esc to clear text)"
            className="grow min-w-0 h-[26px] px-0.5 bg-white border border-[#aaa7a3] rounded-xs outline-none placeholder:text-[#7c7b79]"
          />
          <button type="button" aria-label="Advanced" className={clsx(pushButton, 'w-6 h-6')}>
            <svg width="17" height="17" fill="none">
              <circle cx="8.500" cy="8.500" r="6.500" stroke="#8696a5" strokeWidth="2.500" strokeDasharray="3 2.100" />
              <circle cx="8.500" cy="8.500" r="5" fill="#e3ebf2" stroke="#8696a5" />
              <circle cx="8.500" cy="8.500" r="1.500" fill="#fff" stroke="#8696a5" />
            </svg>
          </button>
        </div>
        <div className="flex h-[79px]">
          <div className="grow">
            <div className="flex items-center gap-1">
              <h3 className="grow flex items-center h-7 pl-2.5 gap-2 border border-[#b5b2ad] font-bold whitespace-nowrap">
                <span className="w-[13px] h-[5px] bg-[#7f9ee8] border border-[#233a80]" />
                Properties (sandwich.med)
              </h3>
              <button type="button" aria-label="Copy properties" className={clsx(pushButton, 'w-7 h-6')}>
                <svg width="16" height="16" fill="none" stroke="#3d3d3d">
                  <path d="M6.500 1.500h5l3 3v8h-8z" fill="#d5d5d5" strokeWidth="1.300" />
                  <path d="M1.500 3.500h5l3 3v8h-8z" fill="#fff" strokeWidth="1.300" />
                  <path d="M6 4v3h3" />
                </svg>
              </button>
              <button type="button" aria-label="Paste properties" className={clsx(pushButton, 'w-7 h-6')}>
                <svg width="16" height="16" fill="none" stroke="#8b8b88">
                  <path d="M1.500 2.500h9v11h-9z" fill="#aaa9a7" />
                  <path d="M4 1h4v3H4z" fill="#888" />
                  <path d="M7.500 5.500h4l3 3v6h-7z" fill="#e6e5e4" />
                </svg>
              </button>
              <button type="button" aria-label="Reset to defaults" className={clsx(pushButton, 'w-7 h-6')}>
                <svg width="16" height="16" fill="none">
                  <path d="M12 4A6 6 0 1 0 14 9.500" stroke="#94928e" strokeWidth="3" />
                  <path d="M12 4A6 6 0 1 0 14 9.500" stroke="#eee" />
                  <path d="M14.500 1v6.500H8z" fill="#ddd" stroke="#94928e" />
                </svg>
              </button>
              <button type="button" aria-label="Save as defaults" className={clsx(pushButton, 'w-7 h-6')}>
                <svg width="14" height="16" fill="none">
                  <path d="M1.500 11.500h11v4h-11z" fill="#eee" stroke="#777" />
                  <path d="M7 1v7" stroke="#46b81c" strokeWidth="3" />
                  <path d="M2 7h10l-5 5z" fill="#57cf22" stroke="#3b8d1e" strokeWidth=".7" />
                </svg>
              </button>
            </div>
            <div className="flex justify-end pt-[15px] pr-[9px]">
              <button type="button" aria-label="Refresh" className={clsx(pushButton, 'w-7 h-6')}>
                <svg width="16" height="16" fill="none">
                  <path d="m1 0 3 2c4-2 8-1 9 3H9C8 4 7 4 6 5l2 2-7 1z" fill="#2c4fc4" />
                  <path d="m15 16-3-2c-4 2-8 1-9-3h4c1 1 2 1 3 0L8 9l7-1z" fill="#4db2ea" />
                </svg>
              </button>
            </div>
          </div>
          <div className="w-3.5 shrink-0 flex flex-col border-l border-[#b5b2ad] bg-[#e0deda]">
            <button type="button" aria-label="Scroll up" className="h-[14px] flex items-center justify-center border-b border-[#b5b2ad] bg-[#f2f0ed]">
              <svg width="8" height="4"><path d="M0 4h8L4 0z" fill="#4c4a47" /></svg>
            </button>
            <div className="h-[27px] bg-linear-to-r from-white to-[#f4f2ef] border-b border-[#b5b2ad]" />
          </div>
        </div>
      </div>
    </section>
  )
}

function RenderView() {
  return (
    <div className="grow flex border-2 border-r-0 border-b-0 border-[#0000ff]">
      <div className="relative grow border-t border-l border-[#dcdce8] bg-[#52576e] overflow-hidden">
        <svg viewBox="0 0 1200 693" className="absolute inset-0 w-full h-full" fill="none">
          <path d="m385 483 25 1.500L1128 401q12-2 14-6z" fill="#45494a" />
          <path d="m410 484.500 718-83.500q12-2 14-6" stroke="#e6e6e2" strokeDasharray="4 4.500" />
          <path d="m375.500 378.500 752.500-91 14.500 107.500-758 88z" fill="#cccac2" stroke="#f2f2ee" />
          <path d="m384.500 483 758-88" stroke="#fff" strokeWidth="1.500" />
          <path d="m377.500 393.500 749.500-91M384 467.500l756-88" stroke="#f4f4f0" strokeDasharray="4 4.500" />
        </svg>
        <svg width="100" height="80" className="absolute bottom-0 left-[70px]" fill="none">
          <path d="m28 70-6-50" stroke="#c9c21c" strokeWidth="1.500" />
          <path d="m18 27 4-10 5 10z" fill="#d9d015" stroke="#847d10" strokeWidth=".7" />
          <path d="m28 69 46-5" stroke="#10d010" strokeWidth="1.500" />
          <path d="m70 60 12 3.500-11 4z" fill="#06f206" />
          <path d="M27 70h7v4l-3.500 4-3.500-3z" fill="#f60f0f" />
          <g fill="#fff" fontSize="15" fontFamily="Liberation Sans, sans-serif">
            <text x="24" y="27">Y</text>
            <text x="73" y="64">Z</text>
            <text x="32" y="74" fontSize="13">X</text>
          </g>
        </svg>
      </div>
    </div>
  )
}

export default function App() {
  const [time, setTime] = useState('1')

  return (
    <div className="min-h-screen flex flex-col overflow-hidden bg-[#eeebe6] text-black text-[12px] leading-[18px] font-['Noto_Sans_CJK_JP',sans-serif]">
      <Defs />
      <header className="flex items-center h-8 pl-3 gap-3.5 bg-linear-to-b from-[#42403b] to-[#3c3b37]">
        <button type="button" aria-label="Window menu">
          <svg width="12" height="12">
            <circle cx="6" cy="6" r="6" fill="#292825" />
            <circle cx="6" cy="6" r="3.200" fill="#dfdbd2" />
          </svg>
        </button>
        <h1 className="text-[14px] pb-0.5 text-[#85837b] font-['Noto_Sans',sans-serif]">SALOME 9.3.0 - [sandwich]</h1>
      </header>

      <nav className="flex items-start h-[29px] px-1 gap-1.5 border-b border-[#cfccc7]">
        {menus.map((menu) => (
          <button key={menu.text} type="button" className="h-[23px] px-1 border-b border-[#d6d3ce] whitespace-nowrap">
            {menu.text}
            {menu.key && <>(<u className="underline-offset-2">{menu.key}</u>)</>}
          </button>
        ))}
      </nav>

      <div className={clsx(toolbarRow, 'h-[39px]')}>
        <Grip first />
        <ToolGroup tools={fileTools} className="gap-px" />
        <Separator wide />
        <ToolGroup tools={clipTools} className="gap-px" />
        <Grip />
        <Combo label="Module" value="ParaViS" className="w-[120px]" icon={<svg width="18" height="18" viewBox="0 0 24 24"><Stripes /></svg>} />
        <ToolGroup tools={moduleTools} className="gap-px pl-0.5" />
        <Grip />
        <ToolGroup tools={stateTools} />
        <Separator />
        <ToolGroup tools={serverTools} />
        <Separator />
        <ToolGroup tools={undoTools} />
        <Separator />
        <ToolGroup tools={miscTools} />
        <Grip />
        <ToolGroup tools={vcrTools} />
        <Grip />
        <label htmlFor="time" className="shrink-0 pr-1 pt-0.5">Time:</label>
        <input
          id="time"
          value={time}
          onChange={(e) => setTime(e.target.value)}
          className="w-[108px] h-[26px] px-0.5 shrink-0 bg-white border border-[#aaa7a3] rounded-xs outline-none"
        />
        <div className="flex shrink-0 ml-0.5 h-[25px] w-[37px] border border-[#bbb8b4] rounded-xs overflow-hidden">
          <input aria-label="Time step" value="0" disabled className="w-[22px] px-1 text-[#c2c0bc] bg-[#eeebe6]" />
          <span className="grow border-l border-[#bbb8b4] bg-[#f8f6f4]" />
        </div>
      </div>

      <div className={clsx(toolbarRow, 'h-[39px]')}>
        <Grip first />
        <ToolGroup tools={colorTools} />
        <Combo
          label="Coloring"
          value="Solid Color"
          className="w-[180px]"
          icon={<svg width="18" height="14" className="ml-0.5"><circle cx="7" cy="7" r="6" fill="#c9803f" stroke="#3b3128" /></svg>}
        />
        <Combo label="Component" value="" disabled className="w-[72px] ml-[5px]" />
        <Grip />
        <Combo label="Representation" value="Surface" className="w-[150px]" />
        <Grip />
        <ToolGroup tools={cameraTools} />
        <Grip />
        <ToolGroup tools={centerTools} />
        <Grip />
        <button type="button" className="px-2 pt-0.5 shrink-0">annotate_groups</button>
        <button type="button" className="px-2 pt-0.5 shrink-0">ShowSalomeObject</button>
      </div>

      <div className={clsx(toolbarRow, 'h-[38px]')}>
        <Grip first />
        <ToolGroup tools={filterTools} />
        <Grip />
        <ToolGroup tools={analysisTools} />
      </div>

      <main className="grow flex">
        <aside className="flex flex-col w-[388px] shrink-0">
          <PipelineBrowser />
          <ObjectInspector />
        </aside>
        <div className="w-1.5 pt-25 shrink-0 flex items-center justify-center">
          <svg width="2" height="18"><path d="M1 0v18" stroke="#b0ada8" strokeDasharray="1 2" strokeWidth="2" /></svg>
        </div>

        <section className="grow min-w-0 flex flex-col mt-px border-t-2 border-l-2 border-[#9c9a95] pl-px">
          <div role="tablist" className="grid grid-cols-[749fr_456fr] items-end h-[31px] pt-px">
            <button role="tab" aria-selected="false" type="button" className="h-[27px] mb-0.5 pt-0.5 border border-[#b5b2ad] bg-[#dcd9d5]">
              シーン OCC: 1 - ビューアー: 1
            </button>
            <button role="tab" aria-selected="true" type="button" className="h-[30px] pb-0.5 border-t border-[#a9a6a1] bg-linear-to-b from-[#f8f5f1] to-[#eeebe6] text-right text-[#308cc6] whitespace-nowrap">
              ParaView シーン:1 - ビューア:1
            </button>
          </div>
          <div role="tablist" className="flex items-end h-[29px] border-b border-[#b5b2ad]">
            <div role="tab" aria-selected="true" className="flex items-center gap-1 w-[109px] h-[29px] -mb-px pl-3 border-t border-l border-r border-[#b5b2ad] rounded-t-xs bg-[#fdf9f6] whitespace-nowrap">
              <span className="w-[9px] h-[9px] border border-t-2 border-black mr-0.5" />
              Layout #1
              <button type="button" aria-label="Close layout"><CloseBox /></button>
            </div>
            <button role="tab" aria-selected="false" type="button" className="w-[30px] h-[26px] border-t border-r border-[#b5b2ad] rounded-tr-xs bg-[#e9e6e2]">
              +
            </button>
          </div>
          <div className="flex flex-col grow pl-0.5 bg-[#fdf9f6]">
            <div className="flex items-center h-[22px] pb-0.5 text-[11px]">
              <SmallTools tools={viewUndo} />
              <Separator />
              <button type="button" className="w-5">3D</button>
              <SmallTools tools={viewCapture} />
              <Separator />
              <SmallTools tools={viewPlusMinus} />
              <Separator />
              <SmallTools tools={viewSelect} />
            </div>
            <RenderView />
          </div>
        </section>
      </main>
    </div>
  )
}
